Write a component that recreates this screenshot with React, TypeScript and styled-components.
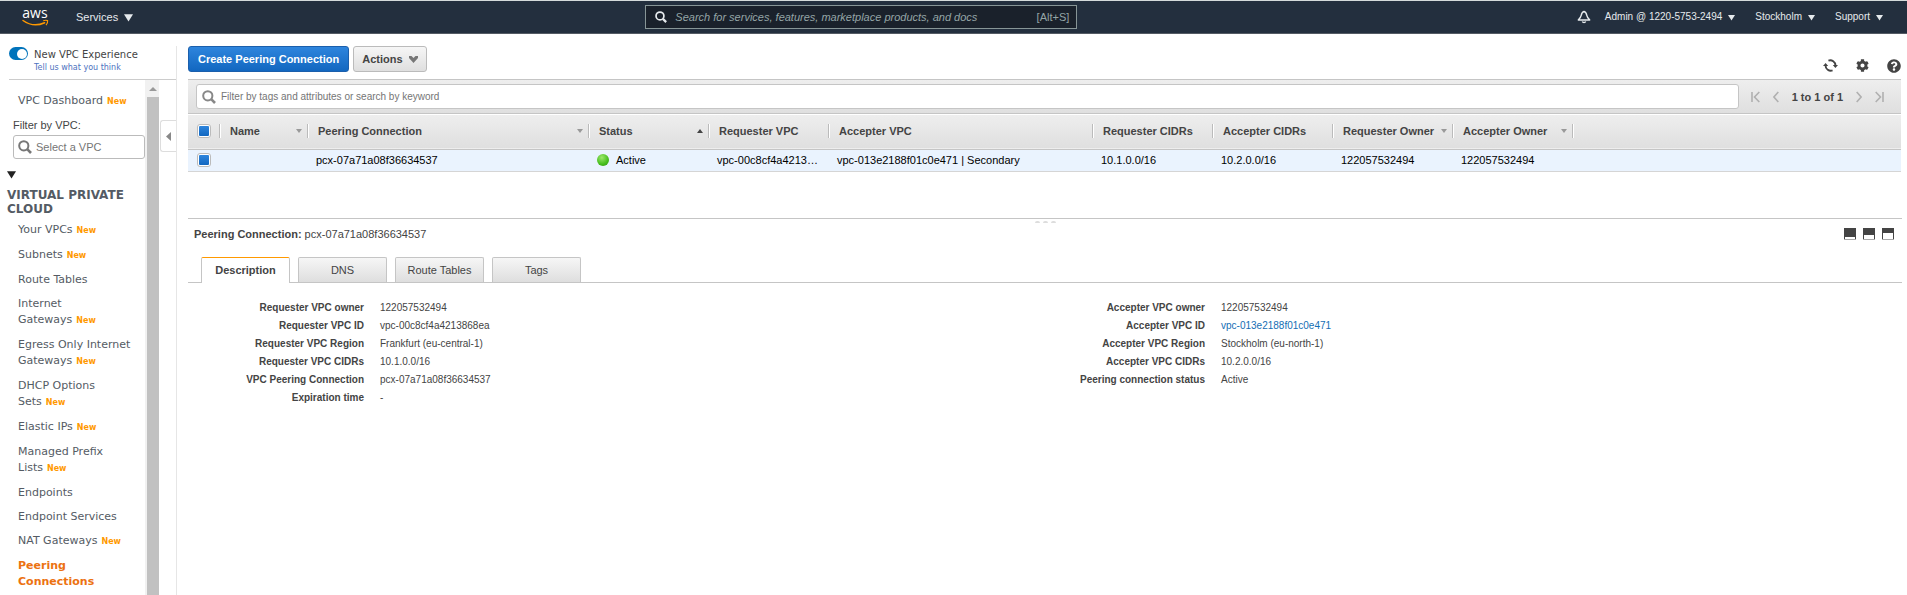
import React, { useState } from "react";
import styled, { createGlobalStyle, css } from "styled-components";
import { FaCog, FaQuestionCircle } from "react-icons/fa";

const GlobalStyle = createGlobalStyle`
  *, *::before, *::after { box-sizing: border-box; }
  body {
    margin: 0;
    background: #fff;
    color: #444;
    font-family: "Liberation Sans", Arial, sans-serif;
    font-size: 11px;
    line-height: 16px;
  }
  button, input { font: inherit; color: inherit; margin: 0; }
  button { cursor: pointer; }
  svg { display: block; flex: none; }
`;

const plainButton = css`
  display: flex;
  align-items: center;
  padding: 0;
  border: 0;
  background: none;
`;

const Page = styled.div`
  display: flex;
  flex-direction: column;
  min-height: 100vh;
`;

/* ---------- top navigation ---------- */

const TopBar = styled.header`
  display: grid;
  grid-template-columns: 7fr 432px 9fr;
  align-items: center;
  height: 34px;
  border-top: 1px solid #d5dbdb;
  border-bottom: 1px solid #545b64;
  background: #232f3e;
  color: #e6eaed;
`;

const TopLeft = styled.div`
  display: flex;
  align-items: center;
  gap: 27px;
  padding-left: 22px;
`;

const LogoLink = styled.a`
  display: block;
`;

const LogoSvg = styled.svg`
  overflow: visible;
`;

const TopRight = styled.nav`
  display: flex;
  align-items: center;
  justify-content: flex-end;
  gap: 20px;
  padding-right: 24px;
`;

const TopMenu = styled.button<{ $large?: boolean }>`
  ${plainButton}
  gap: 6px;
  font-size: ${(p) => (p.$large ? 11 : 10)}px;
`;

const BellButton = styled.button`
  ${plainButton}
  margin-right: -6px;
`;

const GlobalSearch = styled.label`
  display: flex;
  align-items: center;
  gap: 8px;
  height: 24px;
  padding: 0 7px 0 9px;
  border: 1px solid #879596;
  background: #1a212b;
  color: #95a5a6;
`;

const GlobalSearchInput = styled.input`
  flex: 1;
  min-width: 0;
  padding: 0;
  border: 0;
  outline: 0;
  background: none;
  font-style: italic;
  &::placeholder { color: #95a5a6; opacity: 1; }
`;

/* ---------- sidebar ---------- */

const Body = styled.div`
  display: flex;
  flex: 1;
  padding-top: 12px;
`;

const Sidebar = styled.aside`
  display: flex;
  flex-direction: column;
  flex: none;
  width: 177px;
  border-right: 1px solid #e6e6e6;
  font-family: Verdana, "DejaVu Sans", sans-serif;
  color: #545b64;
`;

const Experience = styled.div`
  display: flex;
  gap: 6px;
  height: 34px;
  margin-left: 9px;
  border-bottom: 1px solid #ccc;
`;

const Toggle = styled.input`
  appearance: none;
  flex: none;
  display: flex;
  align-items: center;
  justify-content: flex-end;
  width: 19px;
  height: 13px;
  margin-top: 1px;
  padding: 0 1px;
  border-radius: 7px;
  background: #0073bb;
  &::after {
    content: "";
    width: 10px;
    height: 10px;
    border-radius: 50%;
    background: #fff;
  }
  &:not(:checked) { background: #879596; justify-content: flex-start; }
`;

const ExperienceText = styled.div`
  display: flex;
  flex-direction: column;
  font-size: 10px;
  line-height: 14px;
  padding-top: 2px;
  color: #444;
`;

const FeedbackLink = styled.a`
  font-size: 8px;
  line-height: 12px;
  color: #4d72c0;
  text-decoration: none;
`;

const SidebarBody = styled.div`
  display: flex;
  flex: 1;
`;

const NavPane = styled.nav`
  flex: 1;
  min-width: 0;
  padding-top: 13px;
`;

const NavLink = styled.a<{ $active?: boolean; $badge?: boolean }>`
  display: block;
  padding: 0 8px ${(p) => (p.$badge ? 9 : 8)}px 18px;
  font-size: 11px;
  line-height: 16px;
  text-decoration: none;
  color: ${(p) => (p.$active ? "#ec7211" : "#545b64")};
  font-weight: ${(p) => (p.$active ? 700 : 400)};
`;

const Badge = styled.span`
  margin-left: 4px;
  font-size: 8px;
  line-height: 8px;
  font-weight: 700;
  color: #ff9900;
`;

const VpcFilter = styled.label`
  display: block;
  padding: 0 0 0 13px;
  font-family: "Liberation Sans", Arial, sans-serif;
  font-size: 11px;
  line-height: 14px;
  color: #444;
`;

const VpcFilterBox = styled.span`
  display: flex;
  align-items: center;
  gap: 4px;
  height: 24px;
  margin-top: 3px;
  padding: 0 4px;
  border: 1px solid #bbb;
  border-radius: 3px;
  color: #777;
`;

const BareInput = styled.input`
  flex: 1;
  min-width: 0;
  padding: 0;
  border: 0;
  outline: 0;
  background: none;
  &::placeholder { color: #757575; opacity: 1; }
`;

const SectionToggle = styled.button`
  ${plainButton}
  margin: 11px 0 9px 7px;
`;

const SectionTitle = styled.h2`
  margin: 0 0 6px;
  padding-left: 7px;
  font-size: 12px;
  line-height: 14px;
  font-weight: 700;
`;

const ScrollTrack = styled.div`
  display: flex;
  flex-direction: column;
  flex: none;
  width: 14px;
  padding-left: 2px;
  background: #f1f1f1;
`;

const ScrollUp = styled.button`
  ${plainButton}
  justify-content: center;
  height: 17px;
`;

const ScrollThumb = styled.div`
  flex: 1;
  background: #c1c1c1;
`;

const Rail = styled.div`
  flex: none;
  width: 17px;
  padding: 40px 0 0 1px;
`;

const CollapseButton = styled.button`
  ${plainButton}
  justify-content: center;
  width: 100%;
  height: 32px;
  border: 1px solid #ddd;
  border-right: 0;
  border-radius: 3px 0 0 3px;
`;

/* ---------- main ---------- */

const Main = styled.main`
  flex: 1;
  min-width: 0;
  padding: 0 6px 0 11px;
`;

const Toolbar = styled.div`
  display: flex;
  align-items: flex-start;
  gap: 4px;
  height: 33px;
`;

const ActionButton = styled.button<{ $primary?: boolean }>`
  display: flex;
  align-items: center;
  gap: 6px;
  height: 26px;
  padding: 0 ${(p) => (p.$primary ? 9 : 8)}px;
  border: 1px solid ${(p) => (p.$primary ? "#1b5fac" : "#bbb")};
  border-radius: 3px;
  background: ${(p) =>
    p.$primary ? "linear-gradient(#2e85dd, #1267c0)" : "linear-gradient(#f6f6f6, #dfdfdf)"};
  color: ${(p) => (p.$primary ? "#fff" : "#444")};
  font-weight: 700;
`;

const ToolIcons = styled.div`
  display: flex;
  gap: 18px;
  margin: 12px 0 0 auto;
`;

const IconButton = styled.button`
  ${plainButton}
  color: #444;
`;

const FilterBar = styled.div`
  display: flex;
  align-items: center;
  gap: 12px;
  height: 35px;
  padding: 0 17px 0 8px;
  border-top: 1px solid #c5c5c5;
  border-bottom: 1px solid #c5c5c5;
  background: linear-gradient(#eee, #dfdfdf);
`;

const FilterField = styled.label`
  display: flex;
  align-items: center;
  gap: 5px;
  flex: 1;
  height: 25px;
  padding: 0 5px;
  border: 1px solid #c5c5c5;
  border-radius: 3px;
  background: #fff;
  font-size: 10px;
`;

const Pager = styled.div`
  display: flex;
  align-items: center;
  gap: 13px;
  font-weight: 700;
`;

const Grid = styled.table`
  width: 100%;
  margin-top: 1px;
  table-layout: fixed;
  border-collapse: collapse;
`;

const Col = styled.col<{ $w?: number }>`
  width: ${(p) => (p.$w ? `${p.$w}px` : "auto")};
`;

const HeadRow = styled.tr`
  background: linear-gradient(#eee, #dfdfdf);
  border-bottom: 1px solid #c5c5c5;
`;

const HeadCell = styled.th`
  height: 34px;
  padding: 0;
  text-align: left;
  font-weight: 700;
  white-space: nowrap;
`;

const HeadInner = styled.div<{ $check?: boolean }>`
  display: flex;
  align-items: center;
  justify-content: space-between;
  height: 14px;
  margin-bottom: 2px;
  padding: 0 5px 0 ${(p) => (p.$check ? 9 : 10)}px;
  border-right: 1px solid #bbb;
  box-shadow: 1px 0 #fff;
`;

const Row = styled.tr`
  background: #eaf3fe;
  border-bottom: 1px solid #d5d5d5;
  color: #000;
`;

const Cell = styled.td<{ $check?: boolean }>`
  height: 22px;
  padding: 0 8px 0 ${(p) => (p.$check ? 9 : 8)}px;
  overflow: hidden;
  text-overflow: ellipsis;
  white-space: nowrap;
`;

const CheckBox = styled.input`
  appearance: none;
  display: block;
  width: 14px;
  height: 14px;
  padding: 1px;
  border: 1px solid #bbb;
  border-radius: 3px;
  background: #fff;
  &:checked {
    background: linear-gradient(#2e85dd, #1267c0) content-box, #fff;
  }
`;

const StatusText = styled.span`
  display: flex;
  align-items: center;
  gap: 7px;
`;

const Dot = styled.i`
  width: 12px;
  height: 12px;
  border-radius: 50%;
  background: radial-gradient(circle at 40% 30%, #9be86a, #46bd1c 60%, #2f8f10);
`;

/* ---------- detail panel ---------- */

const Details = styled.section`
  margin-top: 46px;
  margin-right: -1px;
  border-top: 1px solid #c5c5c5;
`;

const DragHandle = styled.div`
  display: flex;
  justify-content: center;
  gap: 3px;
  padding-top: 2px;
  i { width: 5px; height: 2px; border-radius: 2px 2px 0 0; background: #ddd; }
`;

const DetailHeader = styled.div`
  display: flex;
  align-items: center;
  justify-content: space-between;
  padding: 3px 8px 0 6px;
`;

const DetailTitle = styled.h1`
  margin: 0;
  font-size: 11px;
  font-weight: 400;
`;

const SizeButtons = styled.div`
  display: flex;
  gap: 7px;
`;

const Tabs = styled.div`
  display: flex;
  gap: 8px;
  margin-top: 15px;
  padding-left: 13px;
  border-bottom: 1px solid #c5c5c5;
`;

const Tab = styled.button<{ $active?: boolean }>`
  width: 89px;
  height: 25px;
  padding: 0;
  border: 1px solid #c5c5c5;
  border-bottom: 0;
  border-radius: 2px 2px 0 0;
  background: linear-gradient(#f6f6f6, #dedede);
  ${(p) =>
    p.$active &&
    css`
      height: 26px;
      margin-bottom: -1px;
      border-top-color: #f90;
      background: #fff;
      font-weight: 700;
    `}
`;

const Facts = styled.div`
  display: grid;
  grid-template-columns: 1fr 1fr;
  padding: 16px 32px 0 0;
  font-size: 10px;
  line-height: 18px;
`;

const FactList = styled.dl`
  display: grid;
  grid-template-columns: 176px 1fr;
  column-gap: 16px;
  align-content: start;
  margin: 0;
  dt { text-align: right; font-weight: 700; }
  dd { margin: 0; }
`;

const ValueLink = styled.a`
  color: #146eb4;
  text-decoration: none;
`;

/* ---------- icons ---------- */

const Caret = ({ size = 7, color = "currentColor" }: { size?: number; color?: string }) => (
  <svg width={size} height={size} viewBox="0 0 8 8" aria-hidden="true">
    <path d="M0 1h8L4 7.5z" fill={color} />
  </svg>
);

const AwsLogo = () => (
  <LogoSvg width="27" height="19" viewBox="0 0 27 19" aria-label="AWS">
    <text x="13" y="10" textAnchor="middle" fontFamily="Open Sans, sans-serif" fontSize="14" fill="#fff">
      aws
    </text>
    <path d="M1 12.500c7 5 15 5.200 21.600 2.200" fill="none" stroke="#f90" strokeWidth="1.500" strokeLinecap="round" />
    <path d="M21.200 12.700c1.600-.5 3.500-.5 4.400-.1.200 1.400-.3 3.100-1.600 4.500" fill="none" stroke="#f90" strokeWidth="1.200" />
  </LogoSvg>
);

const BellIcon = () => (
  <svg width="14" height="14" viewBox="0 0 14 14" fill="none" stroke="#e6eaed" strokeWidth="1.400" strokeLinejoin="round" aria-hidden="true">
    <path d="M7 1.500c-1.700.5-2.400 1.800-2.800 3.800C3.800 7.300 2.600 8.500 1.300 10h11.400c-1.300-1.500-2.500-2.700-2.900-4.700C9.400 3.300 8.700 2 7 1.500z" />
    <path d="M5.300 11.500a1.800 1.500 0 0 0 3.400 0" />
  </svg>
);

const Magnifier = ({ size, color, weight }: { size: number; color: string; weight: number }) => (
  <svg width={size} height={size} viewBox="0 0 14 14" fill="none" stroke={color} strokeWidth={weight} aria-hidden="true">
    <circle cx="5.800" cy="5.800" r="4.600" />
    <path d="M9.200 9.200L13 13" strokeWidth={weight * 1.3} />
  </svg>
);

const RefreshIcon = () => (
  <svg width="15" height="15" viewBox="0 0 16 16" aria-hidden="true">
    <g fill="none" stroke="#444" strokeWidth="2">
      <path d="M5.800 2.700A5.600 5.600 0 0 1 13.300 8" />
      <path d="M10.200 13.300A5.600 5.600 0 0 1 2.700 8" />
    </g>
    <path d="M10.500 7.500H16L13.200 10.700z M0 8.500h5.500L2.800 5.300z" fill="#444" />
  </svg>
);

const PageArrow = ({ flip, edge }: { flip?: boolean; edge?: boolean }) => (
  <svg width={edge ? 9 : 6} height="12" viewBox={edge ? "0 0 9 12" : "0 0 6 12"} fill="none" stroke="#b0b0b0" strokeWidth="1.600" aria-hidden="true">
    <g transform={flip ? `translate(${edge ? 9 : 6} 0) scale(-1 1)` : undefined}>
      {edge && <path d="M1 1v10" />}
      <path d={edge ? "M8.300 1L3.500 6l4.800 5" : "M5.300 1L.9 6l4.400 5"} />
    </g>
  </svg>
);

const PanelIcon = ({ open }: { open: number }) => (
  <svg width="12" height="12" viewBox="0 0 12 12" aria-hidden="true">
    <rect width="12" height="12" fill="#444" />
    <rect x="1" y={11 - open} width="10" height={open} fill="#fff" />
    <rect y="11" width="12" height="1" fill="#aaa" />
  </svg>
);

/* ---------- data ---------- */

const NAV_ITEMS: { label: string; isNew?: boolean; active?: boolean }[] = [
  { label: "Your VPCs", isNew: true },
  { label: "Subnets", isNew: true },
  { label: "Route Tables" },
  { label: "Internet Gateways", isNew: true },
  { label: "Egress Only Internet Gateways", isNew: true },
  { label: "DHCP Options Sets", isNew: true },
  { label: "Elastic IPs", isNew: true },
  { label: "Managed Prefix Lists", isNew: true },
  { label: "Endpoints" },
  { label: "Endpoint Services" },
  { label: "NAT Gateways", isNew: true },
  { label: "Peering Connections", active: true },
];

const COLUMNS: { label: string; width: number; sort?: "up" | "down" }[] = [
  { label: "Name", width: 88, sort: "down" },
  { label: "Peering Connection", width: 281, sort: "down" },
  { label: "Status", width: 120, sort: "up" },
  { label: "Requester VPC", width: 120 },
  { label: "Accepter VPC", width: 264 },
  { label: "Requester CIDRs", width: 120 },
  { label: "Accepter CIDRs", width: 120 },
  { label: "Requester Owner", width: 120, sort: "down" },
  { label: "Accepter Owner", width: 120, sort: "down" },
];

const REQUESTER: [string, string][] = [
  ["Requester VPC owner", "122057532494"],
  ["Requester VPC ID", "vpc-00c8cf4a4213868ea"],
  ["Requester VPC Region", "Frankfurt (eu-central-1)"],
  ["Requester VPC CIDRs", "10.1.0.0/16"],
  ["VPC Peering Connection", "pcx-07a71a08f36634537"],
  ["Expiration time", "-"],
];

const ACCEPTER: [string, string, boolean?][] = [
  ["Accepter VPC owner", "122057532494"],
  ["Accepter VPC ID", "vpc-013e2188f01c0e471", true],
  ["Accepter VPC Region", "Stockholm (eu-north-1)"],
  ["Accepter VPC CIDRs", "10.2.0.0/16"],
  ["Peering connection status", "Active"],
];

const TABS = ["Description", "DNS", "Route Tables", "Tags"];

const FactColumn = ({ items }: { items: [string, string, boolean?][] }) => (
  <FactList>
    {items.map(([term, value, link]) => (
      <React.Fragment key={term}>
        <dt>{term}</dt>
        <dd>{link ? <ValueLink href="#vpc">{value}</ValueLink> : value}</dd>
      </React.Fragment>
    ))}
  </FactList>
);

export default function App() {
  const [tab, setTab] = useState(TABS[0]);

  return (
    <>
      <GlobalStyle />
      <Page>
        <TopBar>
          <TopLeft>
            <LogoLink href="#home"><AwsLogo /></LogoLink>
            <TopMenu $large>Services <Caret size={9} /></TopMenu>
          </TopLeft>
          <GlobalSearch>
            <Magnifier size={12} color="#e6eaed" weight={2} />
            <GlobalSearchInput
              type="text"
              aria-label="Search"
              placeholder="Search for services, features, marketplace products, and docs"
            />
            <span>[Alt+S]</span>
          </GlobalSearch>
          <TopRight>
            <BellButton aria-label="Notifications"><BellIcon /></BellButton>
            <TopMenu>Admin @ 1220-5753-2494 <Caret /></TopMenu>
            <TopMenu>Stockholm <Caret /></TopMenu>
            <TopMenu>Support <Caret /></TopMenu>
          </TopRight>
        </TopBar>

        <Body>
          <Sidebar>
            <Experience>
              <Toggle type="checkbox" id="experience" defaultChecked />
              <ExperienceText>
                <label htmlFor="experience">New VPC Experience</label>
                <FeedbackLink href="#feedback">Tell us what you think</FeedbackLink>
              </ExperienceText>
            </Experience>
            <SidebarBody>
              <NavPane>
                <NavLink href="#dashboard" $badge>VPC Dashboard<Badge>New</Badge></NavLink>
                <VpcFilter>
                  Filter by VPC:
                  <VpcFilterBox>
                    <Magnifier size={14} color="#777" weight={2} />
                    <BareInput type="text" placeholder="Select a VPC" />
                  </VpcFilterBox>
                </VpcFilter>
                <SectionToggle aria-label="Toggle section"><Caret size={9} color="#222" /></SectionToggle>
                <SectionTitle>VIRTUAL PRIVATE CLOUD</SectionTitle>
                {NAV_ITEMS.map((item) => (
                  <NavLink key={item.label} href="#nav" $active={item.active} $badge={item.isNew}>
                    {item.label}
                    {item.isNew && <Badge>New</Badge>}
                  </NavLink>
                ))}
              </NavPane>
              <ScrollTrack>
                <ScrollUp aria-label="Scroll up">
                  <svg width="8" height="4" viewBox="0 0 8 4"><path d="M0 4h8L4 0z" fill="#999" /></svg>
                </ScrollUp>
                <ScrollThumb />
              </ScrollTrack>
              <Rail>
                <CollapseButton aria-label="Collapse navigation">
                  <svg width="5" height="9" viewBox="0 0 5 9"><path d="M5 0v9L0 4.500z" fill="#888" /></svg>
                </CollapseButton>
              </Rail>
            </SidebarBody>
          </Sidebar>

          <Main>
            <Toolbar>
              <ActionButton $primary>Create Peering Connection</ActionButton>
              <ActionButton>
                Actions
                <svg width="9" height="7" viewBox="0 0 9 7"><path d="M0 0h2.500l2 2 2-2H9v2L4.500 7 0 2z" fill="#777" /></svg>
              </ActionButton>
              <ToolIcons>
                <IconButton aria-label="Refresh"><RefreshIcon /></IconButton>
                <IconButton aria-label="Settings"><FaCog size={13} /></IconButton>
                <IconButton aria-label="Help"><FaQuestionCircle size={14} /></IconButton>
              </ToolIcons>
            </Toolbar>

            <FilterBar>
              <FilterField>
                <Magnifier size={14} color="#888" weight={2} />
                <BareInput type="text" aria-label="Filter" placeholder="Filter by tags and attributes or search by keyword" />
              </FilterField>
              <Pager>
                <IconButton aria-label="First page"><PageArrow edge /></IconButton>
                <IconButton aria-label="Previous page"><PageArrow /></IconButton>
                <span>1 to 1 of 1</span>
                <IconButton aria-label="Next page"><PageArrow flip /></IconButton>
                <IconButton aria-label="Last page"><PageArrow edge flip /></IconButton>
              </Pager>
            </FilterBar>

            <Grid>
              <colgroup>
                <Col $w={32} />
                {COLUMNS.map((c) => <Col key={c.label} $w={c.width} />)}
                <Col />
              </colgroup>
              <thead>
                <HeadRow>
                  <HeadCell>
                    <HeadInner $check><CheckBox type="checkbox" aria-label="Select all" defaultChecked /></HeadInner>
                  </HeadCell>
                  {COLUMNS.map((c) => (
                    <HeadCell key={c.label}>
                      <HeadInner>
                        {c.label}
                        {c.sort && (
                          <svg width="6" height="4" viewBox="0 0 6 4">
                            <path d={c.sort === "up" ? "M0 4h6L3 0z" : "M0 0h6L3 4z"} fill={c.sort === "up" ? "#444" : "#999"} />
                          </svg>
                        )}
                      </HeadInner>
                    </HeadCell>
                  ))}
                  <HeadCell />
                </HeadRow>
              </thead>
              <tbody>
                <Row>
                  <Cell $check><CheckBox type="checkbox" aria-label="Select row" defaultChecked /></Cell>
                  <Cell />
                  <Cell>pcx-07a71a08f36634537</Cell>
                  <Cell><StatusText><Dot />Active</StatusText></Cell>
                  <Cell>vpc-00c8cf4a4213868ea</Cell>
                  <Cell>vpc-013e2188f01c0e471 | Secondary</Cell>
                  <Cell>10.1.0.0/16</Cell>
                  <Cell>10.2.0.0/16</Cell>
                  <Cell>122057532494</Cell>
                  <Cell>122057532494</Cell>
                  <Cell />
                </Row>
              </tbody>
            </Grid>

            <Details>
              <DragHandle><i /><i /><i /></DragHandle>
              <DetailHeader>
                <DetailTitle><b>Peering Connection:</b> pcx-07a71a08f36634537</DetailTitle>
                <SizeButtons>
                  <IconButton aria-label="Minimise panel"><PanelIcon open={2} /></IconButton>
                  <IconButton aria-label="Split panel"><PanelIcon open={4} /></IconButton>
                  <IconButton aria-label="Maximise panel"><PanelIcon open={6} /></IconButton>
                </SizeButtons>
              </DetailHeader>
              <Tabs role="tablist">
                {TABS.map((t) => (
                  <Tab key={t} role="tab" aria-selected={t === tab} $active={t === tab} onClick={() => setTab(t)}>
                    {t}
                  </Tab>
                ))}
              </Tabs>
              <Facts>
                <FactColumn items={REQUESTER} />
                <FactColumn items={ACCEPTER} />
              </Facts>
            </Details>
          </Main>
        </Body>
      </Page>
    </>
  );
}
